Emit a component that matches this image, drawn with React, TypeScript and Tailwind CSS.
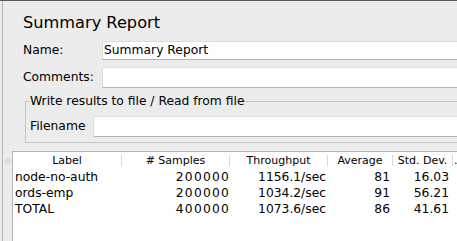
const rows = [
  { label: "node-no-auth", samples: "200000", throughput: "1156.1/sec", average: "81", stdDev: "16.03" },
  { label: "ords-emp", samples: "200000", throughput: "1034.2/sec", average: "91", stdDev: "56.21" },
  { label: "TOTAL", samples: "400000", throughput: "1073.6/sec", average: "86", stdDev: "41.61" },
];

const cols = "grid grid-cols-[109px_108px_98px_65px_60px_40px]";

const Field = ({ value, height }: { value?: string; height: string }) => (
  <div
    className={`flex-1 ${height} bg-white border border-[#dcdcdc] border-b-[#b4b4b4] border-r-0 flex items-center pl-[1px]`}
  >
    {value}
  </div>
);

export default function App() {
  return (
    <div
      className="w-[457px] h-[241px] overflow-hidden bg-[#ececec] border-t border-[#5c5c5c] pl-[2px] text-black text-[12.3px]"
      style={{ fontFamily: '"DejaVu Sans", Verdana, sans-serif' }}
    >
      <div className="h-full border-l border-[#b3b3b3] flex flex-col">
        <div className="pl-[20px]">
          <h1 className="pt-[12px] text-[16.2px] leading-[20px]">Summary Report</h1>

          <div className="mt-[8px] flex items-center mr-[-20px]">
            <span className="w-[79px]">Name:</span>
            <Field value="Summary Report" height="h-[19px]" />
          </div>

          <div className="mt-[7px] flex items-center mr-[-20px]">
            <span className="w-[79px]">Comments:</span>
            <Field height="h-[21px]" />
          </div>
        </div>

        <fieldset className="mt-[5px] ml-[22px] mr-[-30px] border border-[#c4c4c4] pl-[4px] pb-[5px]">
          <legend className="leading-[16px] px-0">Write results to file / Read from file</legend>
          <div className="pt-[7px] flex items-center">
            <span className="w-[63px]">Filename</span>
            <Field height="h-[21px]" />
          </div>
        </fieldset>

        <div className="mt-[8px] flex flex-1">
          <div className="w-[9px] flex justify-center">
            <div className="mt-[7px] w-[6px] h-[6px] rounded-full bg-[#e2e2e2] border border-[#d2d2d2]" />
          </div>
          <div className="flex-1 bg-white border-l border-t border-[#b6b6b6] overflow-hidden">
            <div className={`${cols} h-[17px] text-[11px] leading-[11px]`}>
              {["Label", "# Samples", "Throughput", "Average", "Std. Dev."].map((h) => (
                <div key={h} className="my-[3px] border-r border-[#d8d8d8] text-center">
                  {h}
                </div>
              ))}
              <div className="my-[3px] pl-[1px] whitespace-nowrap">...</div>
            </div>
            {rows.map((r) => (
              <div key={r.label} className={`${cols} h-[16px] leading-[17px]`}>
                <div className="pl-[2px]">{r.label}</div>
                <div className="text-right tracking-[1.2px]">{r.samples}</div>
                <div className="text-right pr-[2px]">{r.throughput}</div>
                <div className="text-right pr-[3px]">{r.average}</div>
                <div className="text-right pr-[4px]">{r.stdDev}</div>
                <div />
              </div>
            ))}
          </div>
        </div>
      </div>
    </div>
  );
}
